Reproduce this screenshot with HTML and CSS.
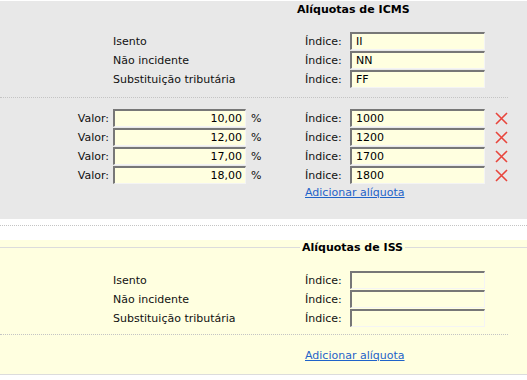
FILE: index.html
```html
<!DOCTYPE html>
<html lang="pt-BR">
<head>
    <meta charset="UTF-8">
    <title>Alíquotas</title>
    <link rel="stylesheet" href="styles.css">
</head>
<body>
    <!-- Alíquotas de ICMS -->
    <div class="block icms">
        <div class="legend legend-icms">
            <span class="legend-text">Alíquotas de ICMS</span>
        </div>

        <div class="grid">
            <span class="name">Isento</span>
            <span class="idx">Índice:</span>
            <input class="field idx-field" type="text" value="II">
            <span></span><span></span>

            <span class="name">Não incidente</span>
            <span class="idx">Índice:</span>
            <input class="field idx-field" type="text" value="NN">
            <span></span><span></span>

            <span class="name">Substituição tributária</span>
            <span class="idx">Índice:</span>
            <input class="field idx-field" type="text" value="FF">
            <span></span><span></span>

            <div class="sep"></div>

            <span class="valor">Valor:</span>
            <input class="field num" type="text" value="10,00">
            <span class="pct">%</span>
            <span class="idx">Índice:</span>
            <input class="field idx-field" type="text" value="1000">
            <span></span>
            <span class="del"><svg width="13" height="13" viewBox="0 0 13 13"><path d="M1 1 L12 12 M12 1 L1 12" /></svg></span>

            <span class="valor">Valor:</span>
            <input class="field num" type="text" value="12,00">
            <span class="pct">%</span>
            <span class="idx">Índice:</span>
            <input class="field idx-field" type="text" value="1200">
            <span></span>
            <span class="del"><svg width="13" height="13" viewBox="0 0 13 13"><path d="M1 1 L12 12 M12 1 L1 12" /></svg></span>

            <span class="valor">Valor:</span>
            <input class="field num" type="text" value="17,00">
            <span class="pct">%</span>
            <span class="idx">Índice:</span>
            <input class="field idx-field" type="text" value="1700">
            <span></span>
            <span class="del"><svg width="13" height="13" viewBox="0 0 13 13"><path d="M1 1 L12 12 M12 1 L1 12" /></svg></span>

            <span class="valor">Valor:</span>
            <input class="field num" type="text" value="18,00">
            <span class="pct">%</span>
            <span class="idx">Índice:</span>
            <input class="field idx-field" type="text" value="1800">
            <span></span>
            <span class="del"><svg width="13" height="13" viewBox="0 0 13 13"><path d="M1 1 L12 12 M12 1 L1 12" /></svg></span>

            <a class="add" href="#">Adicionar alíquota</a>
        </div>
    </div>

    <div class="gap"></div>

    <!-- Alíquotas de ISS -->
    <div class="block iss">
        <div class="legend legend-iss">
            <span class="legend-line pre"></span>
            <span class="legend-text">Alíquotas de ISS</span>
            <span class="legend-line post"></span>
        </div>

        <div class="grid">
            <span class="name">Isento</span>
            <span class="idx">Índice:</span>
            <input class="field idx-field" type="text" value="">
            <span></span><span></span>

            <span class="name">Não incidente</span>
            <span class="idx">Índice:</span>
            <input class="field idx-field" type="text" value="">
            <span></span><span></span>

            <span class="name">Substituição tributária</span>
            <span class="idx">Índice:</span>
            <input class="field idx-field" type="text" value="">
            <span></span><span></span>

            <div class="sep sep-iss"></div>

            <a class="add" href="#">Adicionar alíquota</a>
        </div>
    </div>
</body>
</html>
```

FILE: styles.css
```css
body {
    margin: 0;
    padding-top: 1px;
    background-color: white;
    font-family: "DejaVu Sans", Verdana, sans-serif;
    font-size: 11px;
    color: #111;
    overflow: hidden;
}
.block {
    background-color: #e8e8e8;
}
.icms {
    padding-top: 2px;
    padding-bottom: 15px;
}
.iss {
    background-color: #ffffe0;
    padding-top: 1px;
    padding-bottom: 7px;
    border-bottom: 1px solid #dcdcdc;
}
/* título da seção (tipo legend) */
.legend {
    display: flex;
    align-items: center;
    height: 14px;
    line-height: 14px;
}
.legend-text {
    font-weight: bold;
    color: #000;
}
.legend-icms {
    padding-left: 297px;
}
.legend-line {
    height: 0;
    border-top: 1px solid #dcdcdc;
    margin-top: -2px;
}
.legend-line.pre {
    width: 300px;
    margin-right: 2px;
}
.legend-line.post {
    flex: 1;
    margin-left: 2px;
}
/* linhas do formulário */
.grid {
    display: grid;
    grid-template-columns: 113px 133px 59px 45px 135px 10px 13px;
    grid-auto-rows: minmax(19px, auto);
    align-items: center;
    margin-top: 15px;
}
.iss .grid {
    margin-top: 16px;
}
.name {
    grid-column: 2 / span 2;
}
.valor {
    text-align: right;
    padding-right: 4px;
}
.pct {
    padding-left: 5px;
}
.field {
    box-sizing: border-box;
    height: 18px;
    margin: 0 0 1px 0;
    padding: 0 3px 0 4px;
    border-style: solid;
    border-width: 2px 1px 1px 2px;
    border-color: #777 #f4f4f4 #f4f4f4 #777;
    background-color: #ffffe0;
    font-family: "DejaVu Sans", Verdana, sans-serif;
    font-size: 11px;
    color: #000;
    width: 100%;
}
.num {
    text-align: right;
}
.del {
    display: flex;
    align-items: center;
}
.del svg path {
    stroke: #e8453c;
    stroke-width: 1.6;
    fill: none;
}
.sep {
    grid-column: 1 / -1;
    align-self: start;
    height: 0;
    border-top: 1px dotted #c4c4c4;
    margin: 8px 0 11px;
}
.sep-iss {
    margin: 6px 0 13px;
}
.add {
    grid-column: 4 / span 3;
    color: #1f63c9;
    line-height: 14px;
    align-self: start;
    margin-top: 1px;
}
.gap {
    height: 14px;
    border-top: 1px dotted #c4c4c4;
    margin-top: 6px;
}
```
